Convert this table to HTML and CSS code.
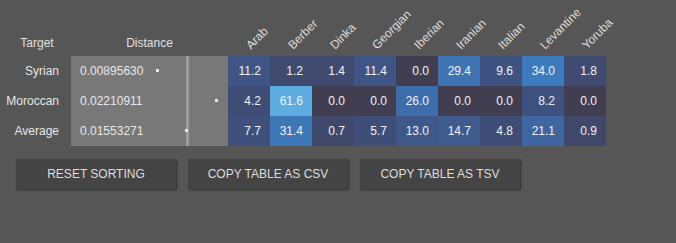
FILE: index.html
```html
<!DOCTYPE html>
<html lang="en">
<head>
<meta charset="utf-8">
<title>Distance table</title>
<link rel="stylesheet" href="styles.css">
</head>
<body>
<div class="panel">
  <table class="dist-table">
    <thead>
      <tr>
        <th class="col-target">Target</th>
        <th class="col-distance">Distance</th>
        <th class="col-pop"><span class="rot">Arab</span></th>
        <th class="col-pop"><span class="rot">Berber</span></th>
        <th class="col-pop"><span class="rot">Dinka</span></th>
        <th class="col-pop"><span class="rot">Georgian</span></th>
        <th class="col-pop"><span class="rot">Iberian</span></th>
        <th class="col-pop"><span class="rot">Iranian</span></th>
        <th class="col-pop"><span class="rot">Italian</span></th>
        <th class="col-pop"><span class="rot">Levantine</span></th>
        <th class="col-pop"><span class="rot">Yoruba</span></th>
      </tr>
    </thead>
    <tbody>
      <tr>
        <td class="name">Syrian</td>
        <td class="dist"><span class="dist-val">0.00895630</span><i class="avg-line"></i><i class="dot" style="left:85px"></i></td>
        <td class="heat" style="background:#3f5586">11.2</td>
        <td class="heat" style="background:#3f4a6e">1.2</td>
        <td class="heat" style="background:#3f4a6e">1.4</td>
        <td class="heat" style="background:#3f5586">11.4</td>
        <td class="heat" style="background:#403e50">0.0</td>
        <td class="heat" style="background:#3e74b2">29.4</td>
        <td class="heat" style="background:#3f5382">9.6</td>
        <td class="heat" style="background:#3d7bbf">34.0</td>
        <td class="heat" style="background:#3f4b70">1.8</td>
      </tr>
      <tr>
        <td class="name">Moroccan</td>
        <td class="dist"><span class="dist-val">0.02210911</span><i class="avg-line"></i><i class="dot" style="left:144px"></i></td>
        <td class="heat" style="background:#3f4c75">4.2</td>
        <td class="heat" style="background:#5dade0">61.6</td>
        <td class="heat" style="background:#403e50">0.0</td>
        <td class="heat" style="background:#403e50">0.0</td>
        <td class="heat" style="background:#3e6dab">26.0</td>
        <td class="heat" style="background:#403e50">0.0</td>
        <td class="heat" style="background:#403e50">0.0</td>
        <td class="heat" style="background:#3f517f">8.2</td>
        <td class="heat" style="background:#403e50">0.0</td>
      </tr>
      <tr>
        <td class="name">Average</td>
        <td class="dist"><span class="dist-val">0.01553271</span><i class="avg-line"></i><i class="dot" style="left:114px"></i></td>
        <td class="heat" style="background:#3f507c">7.7</td>
        <td class="heat" style="background:#3d77b7">31.4</td>
        <td class="heat" style="background:#3f4869">0.7</td>
        <td class="heat" style="background:#3f4e78">5.7</td>
        <td class="heat" style="background:#3f588a">13.0</td>
        <td class="heat" style="background:#3f5b8e">14.7</td>
        <td class="heat" style="background:#3f4c75">4.8</td>
        <td class="heat" style="background:#3f66a0">21.1</td>
        <td class="heat" style="background:#3f4869">0.9</td>
      </tr>
    </tbody>
  </table>

  <div class="actions">
    <button class="btn" type="button">RESET SORTING</button>
    <button class="btn" type="button">COPY TABLE AS CSV</button>
    <button class="btn" type="button">COPY TABLE AS TSV</button>
  </div>
</div>
</body>
</html>
```

FILE: styles.css
```css
html, body {
  margin: 0;
  padding: 0;
  background: #565656;
}

body {
  font-family: "Liberation Sans", Arial, sans-serif;
  font-size: 12px;
  color: #e4e4e4;
  width: 676px;
  height: 243px;
  overflow: hidden;
}

.panel {
  display: flex;
  flex-direction: column;
  align-items: flex-start;
}

.dist-table {
  border-collapse: collapse;
  border-spacing: 0;
  margin-left: 3px;
  table-layout: fixed;
}

.dist-table th,
.dist-table td {
  padding: 0;
  font-weight: normal;
  white-space: nowrap;
}

.dist-table thead th {
  height: 56px;
  vertical-align: bottom;
  padding-bottom: 6px;
  box-sizing: border-box;
  color: #e0e0e0;
}

.col-target {
  width: 68px;
  text-align: center;
}

.col-distance {
  width: 157px;
  text-align: center;
}

.col-pop {
  width: 42px;
  position: relative;
}

/* column names tilted up to the right */
.rot {
  position: absolute;
  left: 25px;
  bottom: 4px;
  transform-origin: 0 100%;
  transform: rotate(-45deg);
  line-height: 14px;
  color: #dcdcdc;
}

.dist-table tbody td {
  height: 30px;
  box-sizing: border-box;
}

.name {
  text-align: right;
  padding-right: 12px !important;
  color: #e6e6e6;
}

.dist {
  position: relative;
  background: #787878;
  padding-left: 9px !important;
  color: #e8e8e8;
}

.avg-line {
  position: absolute;
  left: 115px;
  top: 0;
  bottom: 0;
  width: 3px;
  background: #9c9c9c;
}

.dot {
  position: absolute;
  top: 13px;
  width: 3px;
  height: 3px;
  background: #e6e6e6;
}

.heat {
  text-align: right;
  padding-right: 9px !important;
  color: #f2f2f2;
}

.actions {
  display: flex;
  gap: 12px;
  margin-top: 13px;
  margin-left: 16px;
}

.btn {
  width: 160px;
  height: 30px;
  border: none;
  border-radius: 0;
  background: #444444;
  color: #dedede;
  font-family: "Liberation Sans", Arial, sans-serif;
  font-size: 12px;
  padding: 0;
  box-shadow: 1px 1px 2px rgba(0, 0, 0, 0.45);
  cursor: pointer;
}
```
